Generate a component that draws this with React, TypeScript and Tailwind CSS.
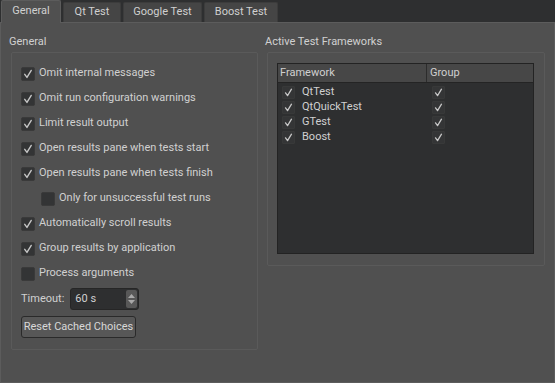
import React from "react";

const font = { fontFamily: 'Roboto, "Liberation Sans", sans-serif' };

function Check({ size = 14 }: { size?: number }) {
  return (
    <svg width={size} height={size} viewBox="0 0 14 14">
      <path d="M3.2 7.4 L5.8 11 L10.8 2.8" fill="none" stroke="#c8c8c8" strokeWidth="1.6" strokeLinecap="round" strokeLinejoin="round" />
    </svg>
  );
}

function Box({ checked }: { checked: boolean }) {
  return (
    <span className="flex h-[14px] w-[14px] shrink-0 items-center justify-center rounded-[2px] border border-[#3a3a3a] bg-[#333435]">
      {checked && <Check size={12} />}
    </span>
  );
}

function Option({ label, checked, indent }: { label: string; checked: boolean; indent?: boolean }) {
  return (
    <div className={`flex h-[25px] shrink-0 items-center gap-[4px] ${indent ? "pl-[20px]" : ""}`}>
      <Box checked={checked} />
      <span>{label}</span>
    </div>
  );
}

function TreeBox() {
  return (
    <span className="flex h-[13px] w-[13px] items-center justify-center rounded-[1px] border border-[#383939] bg-[#343536]">
      <Check size={11} />
    </span>
  );
}

const tabs: [string, string][] = [
  ["Qt Test", "w-[58px]"],
  ["Google Test", "w-[79px]"],
  ["Boost Test", "w-[74px]"],
];
const options: [string, boolean, boolean?][] = [
  ["Omit internal messages", true],
  ["Omit run configuration warnings", true],
  ["Limit result output", true],
  ["Open results pane when tests start", true],
  ["Open results pane when tests finish", true],
  ["Only for unsuccessful test runs", false, true],
  ["Automatically scroll results", true],
  ["Group results by application", true],
  ["Process arguments", false],
];
const frameworks = ["QtTest", "QtQuickTest", "GTest", "Boost"];

export default function App() {
  return (
    <div style={font} className="flex h-[383px] w-[555px] flex-col bg-[#2e2f30] text-[11px] text-[#d0d0d0]">
      <div className="flex h-[22px] items-end">
        <div className="relative z-10 -mb-px ml-px flex h-[23px] w-[60px] items-center justify-center rounded-t-[2px] border border-b-0 border-[#5c5c5c] bg-[#505050] pb-[2px]">
          General
        </div>
        {tabs.map(([t, w]) => (
          <div key={t} className={`ml-[2px] flex h-[20px] items-center justify-center rounded-t-[2px] border border-b-0 border-[#3c3c3c] bg-[#454545] pb-[1px] ${w}`}>
            {t}
          </div>
        ))}
      </div>
      <div className="flex flex-1 gap-[7px] border border-[#5c5c5c] bg-[#505050] pl-[8px] pr-[9px] pt-[9px]">
        <div className="flex w-[249px] flex-col">
          <div className="h-[20px] leading-[20px]">General</div>
          <div className="ml-[2px] flex h-[298px] flex-col rounded-[2px] border border-[#5a5a5a] px-[9px] pt-[8px]">
            {options.map(([l, c, ind]) => (
              <Option key={l} label={l} checked={c} indent={ind} />
            ))}
            <div className="mt-[2px] flex shrink-0 items-center gap-[6px]">
              <span>Timeout:</span>
              <div className="flex h-[22px] w-[69px] items-center rounded-[3px] border border-[#262626] bg-[#2e2f30]">
                <span className="flex-1 pl-[4px]">60 s</span>
                <span className="mr-[1px] flex h-[18px] w-[11px] flex-col items-center justify-center gap-[2px] rounded-[2px] bg-[#585858]">
                  <svg width="7" height="4" viewBox="0 0 7 4"><path d="M0 4 L3.5 0 L7 4 Z" fill="#a8a8a8" /></svg>
                  <svg width="7" height="4" viewBox="0 0 7 4"><path d="M0 0 L3.5 4 L7 0 Z" fill="#a8a8a8" /></svg>
                </span>
              </div>
            </div>
            <div className="mt-[6px] shrink-0">
              <button className="h-[22px] w-[115px] whitespace-nowrap rounded-[3px] border border-[#2a2a2a] bg-[#575757] text-[11px] text-[#d8d8d8]">
                Reset Cached Choices
              </button>
            </div>
          </div>
        </div>
        <div className="flex flex-1 flex-col">
          <div className="h-[20px] leading-[20px]">Active Test Frameworks</div>
          <div className="ml-[2px] flex h-[214px] flex-col rounded-[2px] border border-[#5a5a5a] pb-[11px] pl-[9px] pr-[10px] pt-[10px]">
            <div className="flex flex-1 flex-col border border-[#232323] bg-[#2e2f30]">
              <div className="flex h-[19px] border-b border-[#242424] bg-[#474747]">
                <div className="flex w-[149px] items-center border-r border-[#2c2c2c] pl-[2px]">Framework</div>
                <div className="flex items-center pl-[3px]">Group</div>
              </div>
              <div className="pt-[2px]">
                {frameworks.map((f) => (
                  <div key={f} className="flex h-[15px] items-center">
                    <div className="flex w-[150px] items-center gap-[7px] pl-[4px]">
                      <TreeBox />
                      <span>{f}</span>
                    </div>
                    <div className="pl-[4px]">
                      <TreeBox />
                    </div>
                  </div>
                ))}
              </div>
            </div>
          </div>
        </div>
      </div>
    </div>
  );
}
